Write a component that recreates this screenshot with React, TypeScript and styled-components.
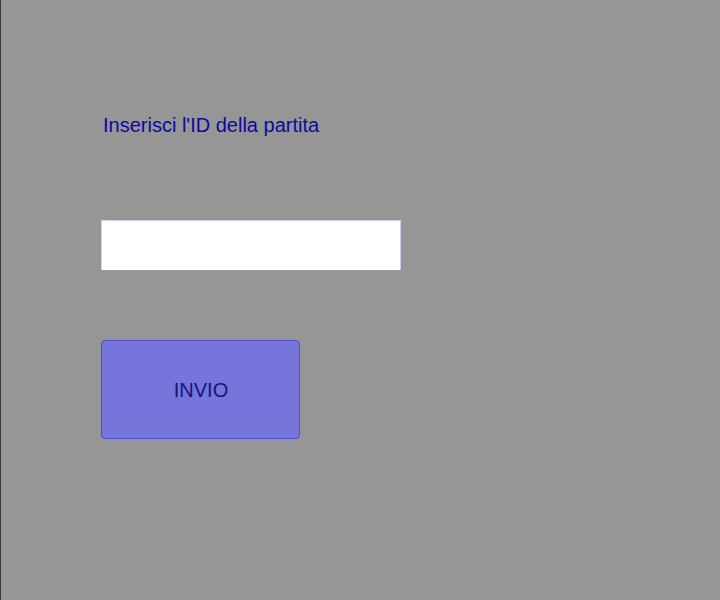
import React from "react";
import styled, { createGlobalStyle } from "styled-components";

const Global = createGlobalStyle`
  html, body { margin: 0; padding: 0; background: #969696; }
  body { font-family: "Liberation Sans", Arial, sans-serif; }
`;

const Page = styled.div`
  width: 720px;
  height: 600px;
  box-sizing: border-box;
  background: #969696;
  border-left: 1px solid #3a3a3a;
  padding: 111px 0 0 100px;
  display: flex;
  flex-direction: column;
  align-items: flex-start;
`;

const Label = styled.label`
  font-size: 20px;
  color: #0a0aa0;
  margin-left: 2px;
  line-height: 28px;
`;

const Input = styled.input`
  margin-top: 81px;
  width: 300px;
  height: 50px;
  box-sizing: border-box;
  border: 1px solid #d0d0f4;
  border-bottom: none;
  background: #ffffff;
  outline: none;
  padding: 0 8px;
  font-size: 18px;
`;

const Button = styled.button`
  margin-top: 70px;
  width: 199px;
  height: 99px;
  box-sizing: border-box;
  padding: 2px 0 0 1px;
  background: #7575db;
  border: 1px solid #4d4dd6;
  border-radius: 4px;
  color: #14147a;
  font-family: "Liberation Sans", Arial, sans-serif;
  font-size: 20px;
  cursor: pointer;
`;

export default function App() {
  return (
    <>
      <Global />
      <Page>
        <Label htmlFor="match">Inserisci l'ID della partita</Label>
        <Input id="match" type="text" />
        <Button>INVIO</Button>
      </Page>
    </>
  );
}
